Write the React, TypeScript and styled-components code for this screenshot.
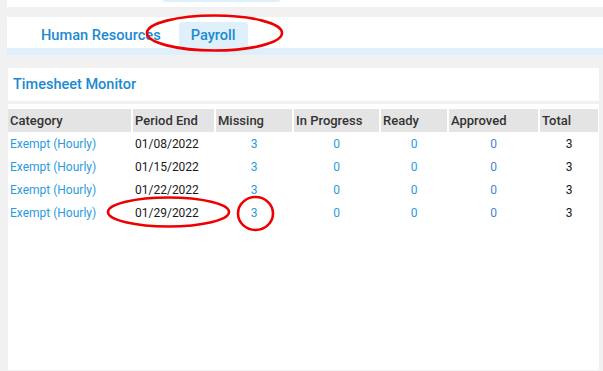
import styled, { createGlobalStyle } from 'styled-components';

const GlobalStyle = createGlobalStyle`
  * { box-sizing: border-box; }
  html, body {
    margin: 0;
    padding: 0;
    background: #f1f1f1;
    font-family: Roboto, "Liberation Sans", Arial, sans-serif;
  }
`;

interface Row {
  category: string;
  periodEnd: string;
  missing: number;
  inProgress: number;
  ready: number;
  approved: number;
  total: number;
}

const rows: Row[] = [
  { category: 'Exempt (Hourly)', periodEnd: '01/08/2022', missing: 3, inProgress: 0, ready: 0, approved: 0, total: 3 },
  { category: 'Exempt (Hourly)', periodEnd: '01/15/2022', missing: 3, inProgress: 0, ready: 0, approved: 0, total: 3 },
  { category: 'Exempt (Hourly)', periodEnd: '01/22/2022', missing: 3, inProgress: 0, ready: 0, approved: 0, total: 3 },
  { category: 'Exempt (Hourly)', periodEnd: '01/29/2022', missing: 3, inProgress: 0, ready: 0, approved: 0, total: 3 },
];

const columns = [
  { label: 'Category', width: 123 },
  { label: 'Period End', width: 83 },
  { label: 'Missing', width: 78 },
  { label: 'In Progress', width: 87 },
  { label: 'Ready', width: 68 },
  { label: 'Approved', width: 91 },
  { label: 'Total', width: 60 },
];

const Page = styled.div`
  position: relative;
  width: 603px;
  height: 371px;
  padding-left: 7px;
  overflow: hidden;
`;

const TopStrip = styled.div`
  height: 7px;
  background: #fff;
`;

const TopPill = styled.div`
  margin-left: 156px;
  width: 117px;
  height: 2px;
  background: #dff0fa;
  border-radius: 0 0 4px 4px;
`;

const TabBar = styled.div`
  margin-top: 10px;
  height: 38px;
  background: #fff;
  border-bottom: 7px solid #dff0fa;
  display: flex;
  align-items: flex-end;
  padding-left: 22px;
  gap: 6px;
`;

const Tab = styled.div<{ $active?: boolean }>`
  height: 26px;
  padding: 0 12px;
  display: flex;
  align-items: center;
  font-size: 14.6px;
  font-weight: 500;
  color: #1b8ad2;
  background: ${(p) => (p.$active ? '#dff0fa' : 'transparent')};
  border-radius: 3px 3px 0 0;
`;

const TitleCard = styled.div`
  margin-top: 13px;
  margin-right: 4px;
  margin-left: 1px;
  height: 33px;
  background: #fff;
  display: flex;
  align-items: center;
  padding-left: 5px;
  font-size: 14.5px;
  font-weight: 500;
  color: #1b8ad2;
`;

const TableCard = styled.div`
  margin-top: 3px;
  margin-right: 4px;
  margin-left: 1px;
  height: 266px;
  background: #fff;
  padding-top: 5px;
`;

const Table = styled.table`
  table-layout: fixed;
  width: 590px;
  border-collapse: separate;
  border-spacing: 0;
`;

const Th = styled.th`
  height: 23px;
  padding: 0 2px;
  background: #e4e4e4;
  color: #333;
  font-size: 13px;
  font-weight: 500;
  text-align: left;
  border-left: 2px solid #fff;
  &:first-child { border-left: none; }
`;

const Td = styled.td<{ $align?: 'left' | 'center'; $tone?: 'link' | 'visited' | 'text' }>`
  height: 23px;
  padding: 0 2px;
  font-size: 12px;
  text-align: ${(p) => p.$align ?? 'center'};
  color: ${(p) => (p.$tone === 'text' ? '#1a1a1a' : p.$tone === 'visited' ? '#4c82cc' : '#2a9be0')};
  border-left: 2px solid #fff;
  &:first-child { border-left: none; }
`;

const Marks = styled.svg`
  position: absolute;
  inset: 0;
  pointer-events: none;
`;

export default function App() {
  return (
    <Page>
      <GlobalStyle />
      <TopStrip>
        <TopPill />
      </TopStrip>
      <TabBar>
        <Tab>Human Resources</Tab>
        <Tab $active>Payroll</Tab>
      </TabBar>
      <TitleCard>Timesheet Monitor</TitleCard>
      <TableCard>
        <Table>
          <colgroup>
            {columns.map((c) => (
              <col key={c.label} style={{ width: c.width }} />
            ))}
          </colgroup>
          <thead>
            <tr>
              {columns.map((c) => (
                <Th key={c.label}>{c.label}</Th>
              ))}
            </tr>
          </thead>
          <tbody>
            {rows.map((r) => (
              <tr key={r.periodEnd}>
                <Td $align="left" $tone="link">{r.category}</Td>
                <Td $align="left" $tone="text">{r.periodEnd}</Td>
                <Td $tone="link">{r.missing}</Td>
                <Td $tone="link">{r.inProgress}</Td>
                <Td $tone="link">{r.ready}</Td>
                <Td $tone="visited">{r.approved}</Td>
                <Td $tone="text">{r.total}</Td>
              </tr>
            ))}
          </tbody>
        </Table>
      </TableCard>
      <Marks width="603" height="371" viewBox="0 0 603 371">
        <ellipse cx="214.5" cy="33" rx="67.5" ry="17.5" fill="none" stroke="#ee0000" strokeWidth="2.6" />
        <ellipse cx="168.5" cy="212" rx="60.5" ry="14.5" fill="none" stroke="#ee0000" strokeWidth="2.6" />
        <ellipse cx="255.5" cy="213.5" rx="17.5" ry="16.5" fill="none" stroke="#ee0000" strokeWidth="2.6" />
      </Marks>
    </Page>
  );
}
